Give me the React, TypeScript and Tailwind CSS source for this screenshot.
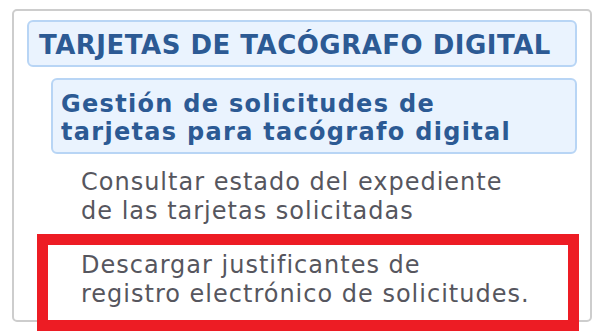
import React from "react";

export default function App() {
  return (
    <div className="w-[599px] h-[333px] overflow-hidden bg-white pl-[12px] pt-[9px] font-['Verdana','DejaVu_Sans',sans-serif]">
      <div className="w-[580px] h-[313px] border-2 border-[#cdcdcd] rounded-[5px] pt-[9px] px-[13px]">
        <div className="h-[47px] border-2 border-[#b8d5f5] bg-[#eaf3fe] rounded-[6px] pl-[10px] pt-[8px]">
          <span className="block text-[26px] leading-[30px] font-bold tracking-[0.5px] text-[#2c5a94] whitespace-nowrap">
            TARJETAS DE TACÓGRAFO DIGITAL
          </span>
        </div>
        <div className="mt-[11px] ml-[24px] h-[76px] border-2 border-[#b8d5f5] bg-[#eaf3fe] rounded-[6px] pl-[8px] pt-[10px]">
          <span className="block text-[24px] leading-[28px] font-bold tracking-[1.3px] text-[#2c5a94] whitespace-nowrap">
            Gestión de solicitudes de
            <br />
            tarjetas para tacógrafo digital
          </span>
        </div>
        <a className="block mt-[14px] ml-[54px] text-[24px] leading-[29px] tracking-[1px] text-[#56565e] whitespace-nowrap">
          Consultar estado del expediente
          <br />
          de las tarjetas solicitadas
        </a>
        <div className="relative z-10 mt-[8px] ml-[10px] -mr-[2px] border-[11px] border-[#ed1c24] bg-white pl-[33px] pt-[6px] pb-[11px]">
          <a className="block text-[24px] leading-[29px] tracking-[1px] text-[#56565e] whitespace-nowrap">
            Descargar justificantes de
            <br />
            registro electrónico de solicitudes.
          </a>
        </div>
      </div>
    </div>
  );
}
